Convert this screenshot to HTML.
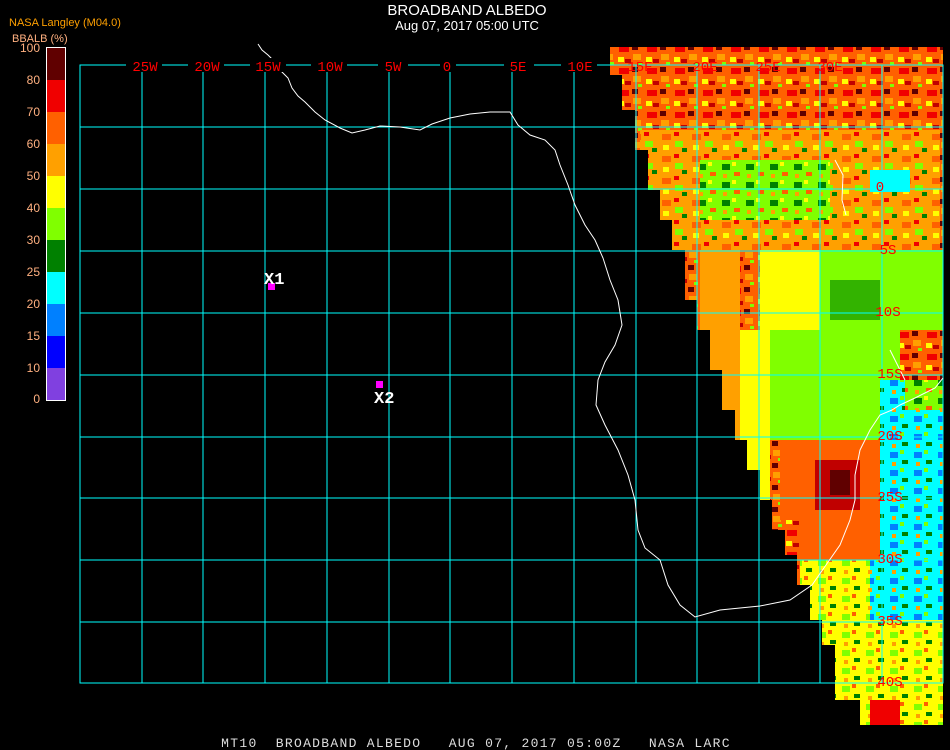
<!DOCTYPE html>
<html><head><meta charset="utf-8"><style>
html,body{margin:0;padding:0;background:#000;width:950px;height:750px;overflow:hidden}
svg{display:block}
</style></head><body>
<svg width="950" height="750" xmlns="http://www.w3.org/2000/svg" font-family="Liberation Sans, sans-serif">
<rect width="950" height="750" fill="#000"/>
<defs>
<clipPath id="d"><path d="M610 47H943V725H860V700H835V645H822V620H810V585H797V555H785V530H772V500H760V470H747V440H735V410H722V370H710V330H697V300H685V250H672V220H660V190H648V150H635V110H622V75H610Z"/></clipPath>
<pattern id="n1" width="28" height="22" patternUnits="userSpaceOnUse"><rect width="28" height="22" fill="#ff6000"/><rect x="3" y="2" width="10" height="6" fill="#f00000"/><rect x="17" y="10" width="8" height="6" fill="#ffa000"/><rect x="2" y="13" width="6" height="5" fill="#ffff00"/><rect x="16" y="1" width="6" height="5" fill="#600000"/><rect x="9" y="15" width="6" height="4" fill="#c00000"/><rect x="22" y="18" width="4" height="3" fill="#80ff00"/></pattern>
<pattern id="n2" width="24" height="18" patternUnits="userSpaceOnUse"><rect width="24" height="18" fill="#80ff00"/><rect x="2" y="2" width="8" height="6" fill="#008000"/><rect x="14" y="10" width="6" height="4" fill="#ff6000"/><rect x="12" y="0" width="4" height="4" fill="#ffff00"/><rect x="3" y="12" width="4" height="4" fill="#ffa000"/></pattern>
<pattern id="n5" width="30" height="22" patternUnits="userSpaceOnUse"><rect width="30" height="22" fill="#ffa000"/><rect x="2" y="2" width="9" height="6" fill="#ff6000"/><rect x="15" y="9" width="8" height="6" fill="#80ff00"/><rect x="14" y="0" width="5" height="4" fill="#f00000"/><rect x="3" y="13" width="6" height="5" fill="#ffff00"/><rect x="22" y="16" width="5" height="4" fill="#008000"/></pattern>
<pattern id="n3" width="24" height="18" patternUnits="userSpaceOnUse"><rect width="24" height="18" fill="#00ffff"/><rect x="2" y="2" width="8" height="6" fill="#0080ff"/><rect x="14" y="10" width="6" height="4" fill="#008000"/><rect x="12" y="0" width="4" height="4" fill="#80ff00"/><rect x="4" y="12" width="4" height="4" fill="#ffa000"/></pattern>
<pattern id="n4" width="24" height="18" patternUnits="userSpaceOnUse"><rect width="24" height="18" fill="#ffff00"/><rect x="2" y="2" width="8" height="6" fill="#80ff00"/><rect x="14" y="10" width="6" height="4" fill="#008000"/><rect x="12" y="0" width="4" height="4" fill="#ff6000"/><rect x="4" y="12" width="4" height="4" fill="#ffa000"/></pattern>
</defs>
<g clip-path="url(#d)">
<rect x="600" y="40" width="350" height="700" fill="url(#n1)"/>
<rect x="640" y="130" width="300" height="120" fill="url(#n5)"/>
<rect x="700" y="160" width="130" height="60" fill="url(#n2)"/>
<rect x="700" y="250" width="40" height="240" fill="#ffa000"/>
<rect x="740" y="330" width="30" height="170" fill="#ffff00"/>
<rect x="760" y="250" width="60" height="80" fill="#ffff00"/>
<path d="M820 250H943V330H900V380H880V440H820Z" fill="#80ff00"/>
<rect x="830" y="280" width="50" height="40" fill="#008000" opacity=".6"/>
<rect x="770" y="330" width="50" height="110" fill="#80ff00"/>
<rect x="870" y="170" width="40" height="22" fill="#00ffff"/>
<path d="M780 440H880V560H800V520H780Z" fill="#ff6000"/>
<rect x="815" y="460" width="45" height="50" fill="#c00000"/>
<rect x="830" y="470" width="20" height="25" fill="#600000"/>
<path d="M880 380H943V620H870V560H880Z" fill="url(#n3)"/>
<rect x="905" y="380" width="38" height="30" fill="url(#n2)"/>
<path d="M800 560H870V620H943V725H800Z" fill="url(#n4)"/>
<rect x="870" y="700" width="30" height="25" fill="#f00000"/>
</g>
<g stroke="#00ffff" stroke-width="1" fill="none" shape-rendering="crispEdges">
<rect x="80" y="65" width="863" height="618"/>
<path d="M142 65V683M203 65V683M265 65V683M327 65V683M389 65V683M450 65V683M512 65V683M574 65V683M636 65V683M697 65V683M759 65V683M820 65V683M882 65V683M80 127H943M80 189H943M80 251H943M80 313H943M80 375H943M80 437H943M80 498H943M80 560H943M80 622H943"/>
</g>
<path d="M258 44L262 50 268 55 275 62 280 70 288 78 292 88 298 96 305 102 315 112 325 120 340 128 352 133 365 130 380 126 400 127 420 130 432 124 450 118 470 114 490 112 510 112 518 125 530 135 545 140 555 150 560 165 568 185 575 205 585 225 595 240 603 258 610 280 618 300 622 325 615 345 605 362 598 380 596 405 605 425 618 450 628 475 635 500 638 530 645 548 660 560 668 585 680 605 695 617 720 610 760 606 790 600 812 585 826 565 840 545 850 520 855 500 855 475 860 450 870 430 880 415 892 410 900 405 915 398 935 388 943 378" stroke="#fff" stroke-width="1" fill="none"/>
<path d="M835 160L843 175 842 200 846 215M890 350L900 370 905 380" stroke="#fff" stroke-width="1" fill="none"/>
<g font-family="Liberation Mono, monospace" font-size="14" fill="#ff0000" text-anchor="middle">
<g fill="#000"><rect x="126" y="58" width="36" height="14"/><rect x="188" y="58" width="36" height="14"/><rect x="250" y="58" width="36" height="14"/><rect x="311" y="58" width="36" height="14"/><rect x="378" y="58" width="30" height="14"/><rect x="440" y="58" width="16" height="14"/><rect x="504" y="58" width="30" height="14"/><rect x="561" y="58" width="36" height="14"/></g>
<text x="145" y="71">25W</text><text x="207" y="71">20W</text><text x="268" y="71">15W</text><text x="330" y="71">10W</text><text x="393" y="71">5W</text><text x="447" y="71">0</text><text x="518" y="71">5E</text><text x="580" y="71">10E</text><text x="640" y="71">15E</text><text x="705" y="71">20E</text><text x="768" y="71">25E</text><text x="830" y="71">30E</text>
<text x="880" y="191">0</text><text x="888" y="254">5S</text><text x="888" y="316">10S</text><text x="890" y="378">15S</text><text x="890" y="440">20S</text><text x="890" y="501">25S</text><text x="890" y="563">30S</text><text x="890" y="625">35S</text><text x="890" y="686">40S</text>
</g>
<rect x="268" y="283" width="7" height="7" fill="#ff00ff"/>
<rect x="376" y="381" width="7" height="7" fill="#ff00ff"/>
<g font-family="Liberation Mono, monospace" font-size="17" font-weight="bold" fill="#fff"><text x="264" y="284">X1</text><text x="374" y="403">X2</text></g>
<text x="467" y="15" font-size="15" fill="#fff" text-anchor="middle">BROADBAND ALBEDO</text>
<text x="467" y="30" font-size="13" fill="#fff" text-anchor="middle">Aug 07, 2017 05:00 UTC</text>
<text x="9" y="26" font-size="11" fill="#ffa000">NASA Langley (M04.0)</text>
<text x="12" y="42" font-size="11" fill="#ffb080">BBALB (%)</text>
<g>
<rect x="47" y="48" width="18" height="32" fill="#600000"/>
<rect x="47" y="80" width="18" height="32" fill="#f00000"/>
<rect x="47" y="112" width="18" height="32" fill="#ff6000"/>
<rect x="47" y="144" width="18" height="32" fill="#ffa000"/>
<rect x="47" y="176" width="18" height="32" fill="#ffff00"/>
<rect x="47" y="208" width="18" height="32" fill="#80ff00"/>
<rect x="47" y="240" width="18" height="32" fill="#008000"/>
<rect x="47" y="272" width="18" height="32" fill="#00ffff"/>
<rect x="47" y="304" width="18" height="32" fill="#0080ff"/>
<rect x="47" y="336" width="18" height="32" fill="#0000ff"/>
<rect x="47" y="368" width="18" height="32" fill="#8040e0"/>
<rect x="46.5" y="47.5" width="19" height="353" fill="none" stroke="#fff"/>
</g>
<g font-size="12" fill="#ffb080" text-anchor="end">
<text x="40" y="52">100</text><text x="40" y="84">80</text><text x="40" y="116">70</text><text x="40" y="148">60</text><text x="40" y="180">50</text><text x="40" y="212">40</text><text x="40" y="244">30</text><text x="40" y="276">25</text><text x="40" y="308">20</text><text x="40" y="340">15</text><text x="40" y="372">10</text><text x="40" y="403">0</text>
</g>
<text x="476" y="747" font-family="Liberation Mono, monospace" font-size="13" letter-spacing="1.3" fill="#ddd" text-anchor="middle" xml:space="preserve">MT10  BROADBAND ALBEDO   AUG 07, 2017 05:00Z   NASA LARC</text>
</svg>
</body></html>
